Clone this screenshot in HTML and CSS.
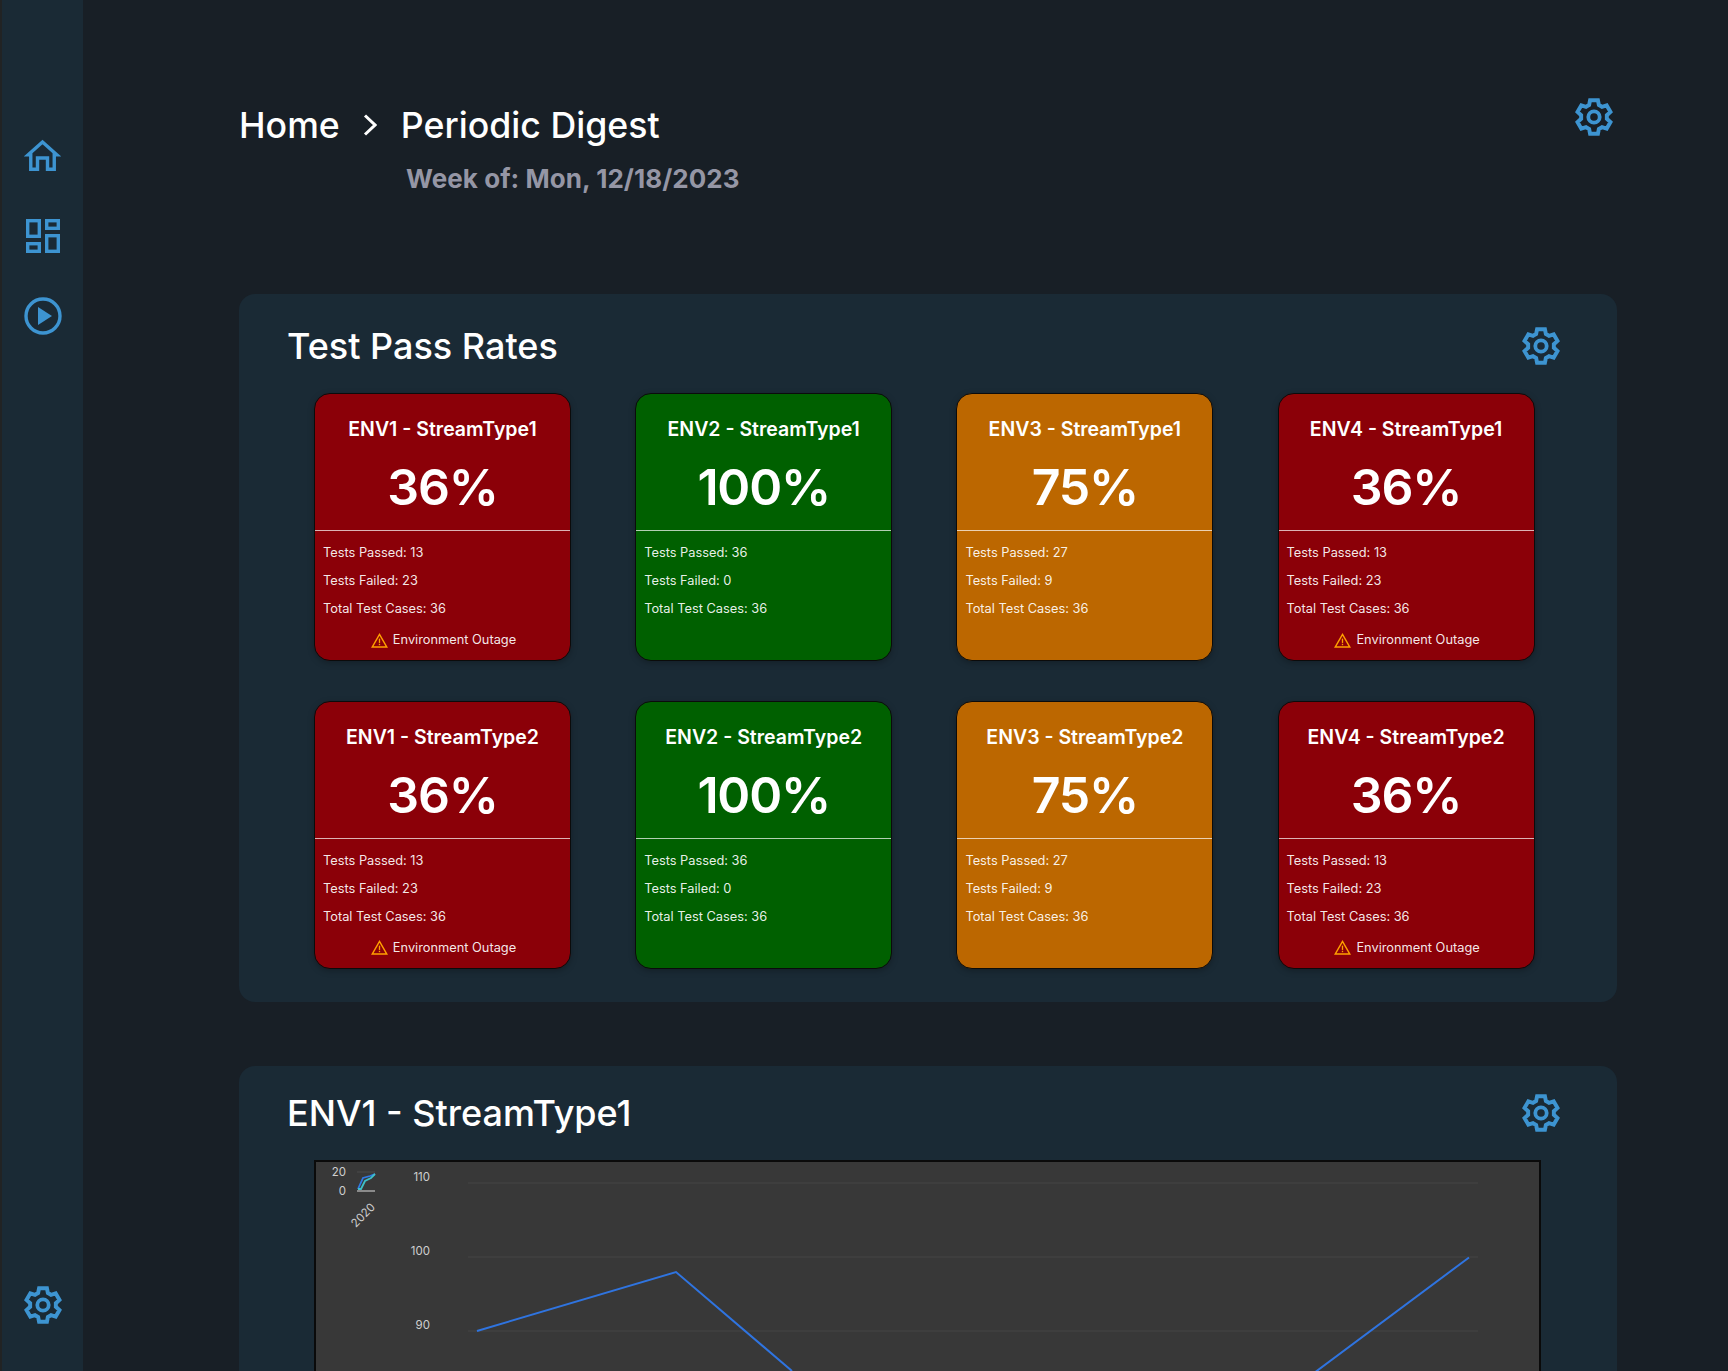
FILE: index.html
```html
<!DOCTYPE html>
<html lang="en">
<head>
  <meta charset="UTF-8" />
  <title>Periodic Digest</title>
  <link rel="stylesheet" href="styles.css">
</head>
<body>
  <svg class="defs" xmlns="http://www.w3.org/2000/svg">
    <symbol id="gear" viewBox="0 0 24 24">
      <path fill="none" stroke="currentColor" stroke-width="2.5" stroke-linejoin="miter" d="M8.93 4.4 9.53 1.4H14.47L15.07 4.4 17.05 5.54 20 4.6 22.4 8.8 20.12 10.86V13.14L22.4 15.2 20 19.4 17.05 18.46 15.07 19.6 14.47 22.6H9.53L8.93 19.6 6.95 18.46 4 19.4 1.6 15.2 3.88 13.14V10.86L1.6 8.8 4 4.6 6.95 5.54Z" />
      <circle cx="12" cy="12" r="3.6" fill="none" stroke="currentColor" stroke-width="2.4" />
    </symbol>
    <symbol id="warn" viewBox="0 0 18 16">
      <path fill="none" stroke="currentColor" stroke-width="1.5" stroke-linejoin="miter" d="M9 1.5 16.8 15H1.2Z" />
      <rect x="8.3" y="6" width="1.4" height="4.6" fill="currentColor" />
      <rect x="8.3" y="11.5" width="1.4" height="1.5" fill="currentColor" />
    </symbol>
  </svg>

  <div class="app">
    <aside class="sidebar">
      <a class="nav-icon" href="#" aria-label="Home">
        <svg width="37" height="32" viewBox="0 0 37 32"><path fill="none" stroke="currentColor" stroke-width="3.4" stroke-miterlimit="10" d="M4.2 15.8 18.5 3 32.8 15.8H30.25V30.25H23.5V19H13.5V30.25H6.75V15.8Z" /></svg>
      </a>
      <a class="nav-icon" href="#" aria-label="Dashboards">
        <svg width="34" height="34" viewBox="0 0 34 34">
          <g fill="none" stroke="currentColor" stroke-width="3.4">
            <rect x="1.7" y="1.7" width="11.6" height="15.6" />
            <rect x="20.7" y="1.7" width="11.6" height="7.6" />
            <rect x="1.7" y="24.7" width="11.6" height="7.6" />
            <rect x="20.7" y="16.7" width="11.6" height="15.6" />
          </g>
        </svg>
      </a>
      <a class="nav-icon" href="#" aria-label="Runs">
        <svg width="38" height="38" viewBox="0 0 38 38">
          <circle cx="19" cy="19" r="17" fill="none" stroke="currentColor" stroke-width="3.4" />
          <path fill="currentColor" d="M14 10 28 19 14 28Z" />
        </svg>
      </a>
      <a class="nav-icon nav-bottom" href="#" aria-label="Settings">
        <svg class="gear"><use href="#gear" /></svg>
      </a>
    </aside>

    <main class="content">
      <header class="page-head">
        <div>
          <h1 class="crumbs">
            <span>Home</span>
            <svg width="14" height="22" viewBox="0 0 14 22"><path fill="none" stroke="#fff" stroke-width="3" d="M2 1.5 12 11 2 20.5" /></svg>
            <span>Periodic Digest</span>
          </h1>
          <p class="week">Week of: Mon, 12/18/2023</p>
        </div>
        <svg class="gear"><use href="#gear" /></svg>
      </header>

      <section class="panel rates">
        <div class="panel-head">
          <h2>Test Pass Rates</h2>
          <svg class="gear"><use href="#gear" /></svg>
        </div>
        <div class="cards">
          <div class="card red">
            <div class="card-top"><h3>ENV1 - StreamType1</h3><div class="pct">36%</div></div>
            <ul class="stats"><li>Tests Passed: 13</li><li>Tests Failed: 23</li><li>Total Test Cases: 36</li></ul>
            <div class="outage"><svg class="warn"><use href="#warn" /></svg>Environment Outage</div>
          </div>
          <div class="card green">
            <div class="card-top"><h3>ENV2 - StreamType1</h3><div class="pct">100%</div></div>
            <ul class="stats"><li>Tests Passed: 36</li><li>Tests Failed: 0</li><li>Total Test Cases: 36</li></ul>
          </div>
          <div class="card orange">
            <div class="card-top"><h3>ENV3 - StreamType1</h3><div class="pct">75%</div></div>
            <ul class="stats"><li>Tests Passed: 27</li><li>Tests Failed: 9</li><li>Total Test Cases: 36</li></ul>
          </div>
          <div class="card red">
            <div class="card-top"><h3>ENV4 - StreamType1</h3><div class="pct">36%</div></div>
            <ul class="stats"><li>Tests Passed: 13</li><li>Tests Failed: 23</li><li>Total Test Cases: 36</li></ul>
            <div class="outage"><svg class="warn"><use href="#warn" /></svg>Environment Outage</div>
          </div>
          <div class="card red">
            <div class="card-top"><h3>ENV1 - StreamType2</h3><div class="pct">36%</div></div>
            <ul class="stats"><li>Tests Passed: 13</li><li>Tests Failed: 23</li><li>Total Test Cases: 36</li></ul>
            <div class="outage"><svg class="warn"><use href="#warn" /></svg>Environment Outage</div>
          </div>
          <div class="card green">
            <div class="card-top"><h3>ENV2 - StreamType2</h3><div class="pct">100%</div></div>
            <ul class="stats"><li>Tests Passed: 36</li><li>Tests Failed: 0</li><li>Total Test Cases: 36</li></ul>
          </div>
          <div class="card orange">
            <div class="card-top"><h3>ENV3 - StreamType2</h3><div class="pct">75%</div></div>
            <ul class="stats"><li>Tests Passed: 27</li><li>Tests Failed: 9</li><li>Total Test Cases: 36</li></ul>
          </div>
          <div class="card red">
            <div class="card-top"><h3>ENV4 - StreamType2</h3><div class="pct">36%</div></div>
            <ul class="stats"><li>Tests Passed: 13</li><li>Tests Failed: 23</li><li>Total Test Cases: 36</li></ul>
            <div class="outage"><svg class="warn"><use href="#warn" /></svg>Environment Outage</div>
          </div>
        </div>
      </section>

      <section class="panel detail">
        <div class="panel-head">
          <h2>ENV1 - StreamType1</h2>
          <svg class="gear"><use href="#gear" /></svg>
        </div>
        <div class="chart">
          <svg width="1222" height="400" viewBox="0 0 1222 400">
            <!-- mini overview -->
            <text class="tick" x="29" y="13.5" text-anchor="end">20</text>
            <text class="tick" x="29" y="32.5" text-anchor="end">0</text>
            <line x1="40" y1="10" x2="58" y2="10" stroke="#4a4a4a" />
            <line x1="40" y1="29" x2="58" y2="29" stroke="#8a8a8a" stroke-width="2" />
            <path fill="none" stroke="#2f7ae5" stroke-width="1.8" d="M41 27 46 16 53 14 58 12" />
            <path fill="none" stroke="#3fc0c8" stroke-width="1.8" d="M41 27H44L48 19 54 16 58 12" />
            <text class="tick" x="46" y="57" text-anchor="middle" transform="rotate(-45 46 53)">2020</text>
            <!-- main chart -->
            <g stroke="#454545" stroke-width="1">
              <line x1="151" y1="21" x2="1161" y2="21" />
              <line x1="151" y1="95" x2="1161" y2="95" />
              <line x1="151" y1="169" x2="1161" y2="169" />
            </g>
            <text class="tick" x="113" y="19" text-anchor="end">110</text>
            <text class="tick" x="113" y="93" text-anchor="end">100</text>
            <text class="tick" x="113" y="167" text-anchor="end">90</text>
            <path fill="none" stroke="#2f74e0" stroke-width="2" d="M160 169 359 110 475 209M997 211 1152 95.5" />
          </svg>
        </div>
      </section>
    </main>
  </div>
</body>
</html>
```

FILE: styles.css
```css
:root {
  --bg: #181f26;
  --panel: #1a2a35;
  --accent: #3d94d1;
  --red: #8b0008;
  --green: #006000;
  --orange: #bc6700;
}
* {
  margin: 0;
  padding: 0;
  box-sizing: border-box;
}
html, body {
  height: 100%;
  overflow: hidden;
}
body {
  font-family: Inter, "Liberation Sans", sans-serif;
  background-color: var(--bg);
  color: #fff;
}
.defs {
  display: none;
}
.app {
  display: flex;
  height: 1371px;
}
.gear {
  display: block;
  flex: none;
  width: 38px;
  height: 38px;
  color: var(--accent);
}

/* sidebar */
.sidebar {
  flex: none;
  width: 83px;
  height: 100%;
  background-color: var(--panel);
  border-left: 2px solid #212324;
  padding: 139px 0 47px;
  display: flex;
  flex-direction: column;
  align-items: center;
  color: var(--accent);
}
.nav-icon {
  display: block;
  color: inherit;
  line-height: 0;
  margin-bottom: 48px;
}
.nav-icon:nth-child(2) {
  margin-bottom: 44px;
}
.nav-bottom {
  margin-top: auto;
  margin-bottom: 0;
}

/* page header */
.content {
  flex: 1;
  min-width: 0;
  padding: 98px 111px 0 156px;
}
.page-head {
  display: flex;
  justify-content: space-between;
  align-items: flex-start;
  padding-right: 4px;
  margin-bottom: 99px;
}
.crumbs {
  display: flex;
  align-items: center;
  gap: 23.5px;
  font-size: 35.7px;
  font-weight: 500;
  line-height: 44px;
  margin-top: 5px;
}
.week {
  font-size: 26px;
  font-weight: 700;
  letter-spacing: 0.05px;
  line-height: 32px;
  color: #9596a5;
  margin: 16px 0 0 167px;
}

/* panels */
.panel {
  background-color: var(--panel);
  border-radius: 16px;
}
.rates {
  height: 708px;
  padding-top: 33px;
  margin-bottom: 64px;
}
.detail {
  padding-top: 28px;
  height: 500px;
}
.panel-head {
  display: flex;
  justify-content: space-between;
  align-items: center;
  padding: 0 57px 0 48px;
  margin-bottom: 28px;
}
.panel-head h2 {
  font-size: 36px;
  font-weight: 500;
  line-height: 38px;
}

/* pass rate cards */
.cards {
  display: grid;
  grid-template-columns: repeat(4, 257px);
  column-gap: 64.2px;
  row-gap: 39.5px;
  padding-left: 75px;
}
.card {
  height: 268px;
  border: 1px solid #0b0b0b;
  border-radius: 16px;
  box-shadow: 0 2px 6px rgba(0, 0, 0, 0.25);
}
.red { background-color: var(--red); }
.green { background-color: var(--green); }
.orange { background-color: var(--orange); }
.card-top {
  text-align: center;
  padding: 21px 0 11px;
  border-bottom: 1px solid rgba(255, 255, 255, 0.7);
}
.card-top h3 {
  font-size: 19.5px;
  font-weight: 600;
  line-height: 28px;
}
.pct {
  font-size: 50px;
  font-weight: 600;
  letter-spacing: -1.2px;
  line-height: 64px;
  margin-top: 12px;
}
.stats {
  list-style: none;
  padding: 8px 0 0 8px;
  font-size: 12.8px;
  line-height: 28px;
  color: rgba(255, 255, 255, 0.92);
}
.outage {
  display: flex;
  align-items: center;
  justify-content: center;
  gap: 5px;
  font-size: 12.8px;
  line-height: 28px;
  margin-top: 3px;
  padding-left: 2px;
  color: rgba(255, 255, 255, 0.92);
}
.warn {
  width: 17px;
  height: 15px;
  color: #ffa000;
}

/* chart */
.chart {
  width: 1227px;
  height: 400px;
  margin-left: 75px;
  background-color: #383838;
  border: 2px solid #0a0a0a;
  overflow: hidden;
}
.chart svg {
  display: block;
  margin-left: 1px;
}
.tick {
  font-family: Inter, "Liberation Sans", sans-serif;
  font-size: 11.5px;
  fill: #cfcfcf;
}
```
